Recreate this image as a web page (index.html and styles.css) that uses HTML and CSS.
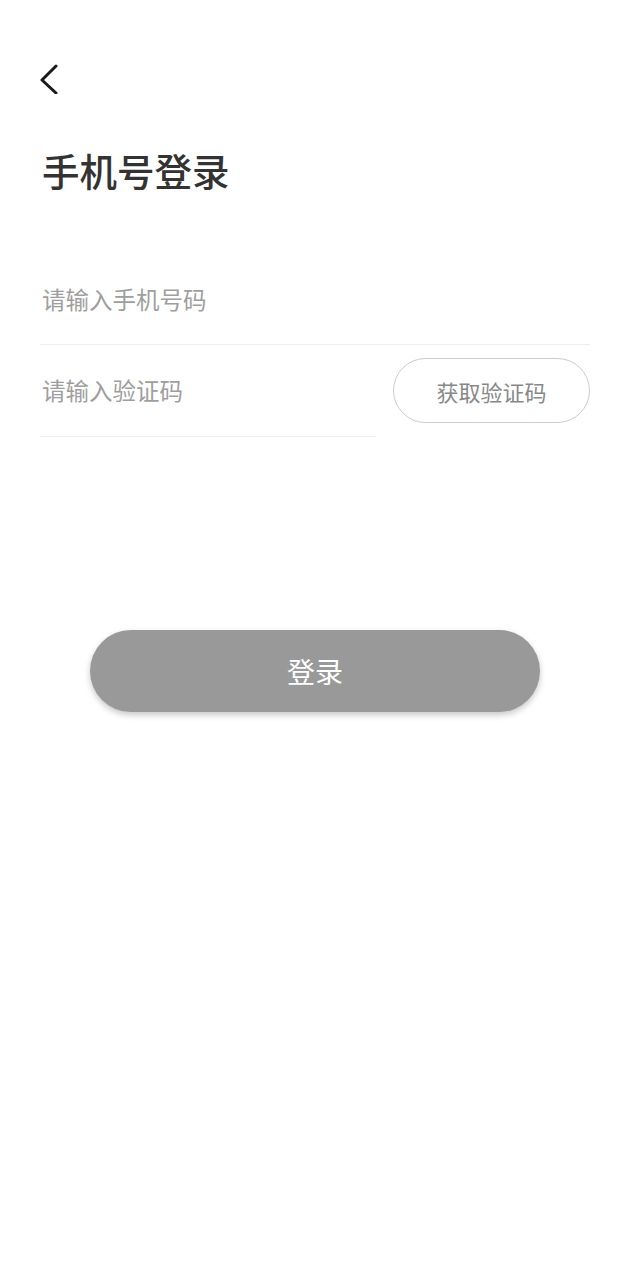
FILE: index.html
```html
<!DOCTYPE html>
<html lang="zh-CN">
<head>
<meta charset="utf-8">
<title>手机号登录</title>
<link rel="stylesheet" href="styles.css">
</head>
<body>
<div class="page">
  <div class="back">
    <svg width="20" height="30" viewBox="0 0 20 30"><polyline points="16,2 2,16 16,29" fill="none" stroke="#1a1a1a" stroke-width="3" stroke-linecap="round" stroke-linejoin="round"/></svg>
  </div>
  <h1 class="title">手机号登录</h1>
  <div class="form">
    <div class="field field-phone">
      <span class="placeholder">请输入手机号码</span>
    </div>
    <div class="code-row">
      <div class="field field-code">
        <span class="placeholder">请输入验证码</span>
      </div>
      <div class="code-btn">获取验证码</div>
    </div>
  </div>
  <div class="login-btn">登录</div>
</div>
</body>
</html>
```
FILE: styles.css
```css
html, body {
  margin: 0;
  padding: 0;
  background: #ffffff;
}
body {
  font-family: "Noto Sans CJK SC", "Noto Sans", sans-serif;
  width: 630px;
  height: 1280px;
}
.page {
  padding: 64px 40px 0 40px;
}
.back {
  height: 30px;
}
.back svg {
  display: block;
}
.title {
  margin: 57px 0 0 2px;
  font-size: 37.5px;
  line-height: 37px;
  font-weight: 500;
  color: #333333;
}
.form {
  margin-top: 100px;
}
.field {
  border-bottom: 1px solid #eeeeee;
  font-size: 23.5px;
  line-height: 23px;
  color: #9e9e9e;
}
.field-phone {
  padding: 0 0 33px 2px;
}
.code-row {
  display: flex;
  gap: 17px;
  align-items: flex-start;
}
.field-code {
  flex: 1;
  padding: 34px 0 34px 2px;
}
.code-btn {
  margin-top: 13px;
  width: 197px;
  height: 65px;
  box-sizing: border-box;
  border: 1.5px solid #cccccc;
  border-radius: 33px;
  display: flex;
  align-items: center;
  justify-content: center;
  font-size: 22px;
  color: #888888;
}
.login-btn {
  margin: 193px auto 0;
  width: 450px;
  height: 82px;
  border-radius: 41px;
  background: #999999;
  box-shadow: 0 3px 6px rgba(0, 0, 0, 0.22);
  display: flex;
  align-items: center;
  justify-content: center;
  font-size: 28px;
  color: #ffffff;
}
```
